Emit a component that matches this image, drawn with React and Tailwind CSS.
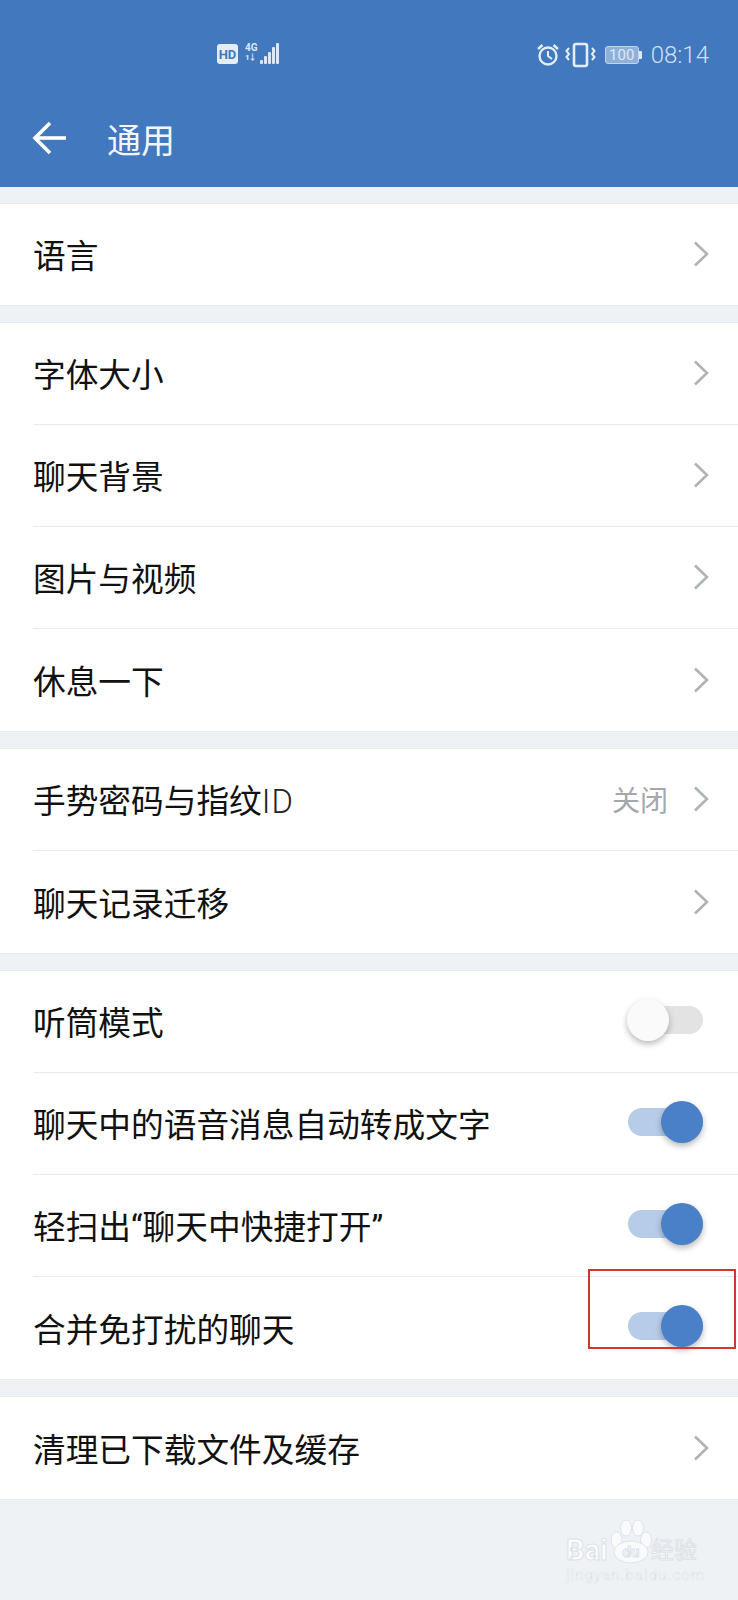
import React from 'react';

const FONT = "font-['Roboto','Noto_Sans_CJK_SC',sans-serif]";

const Chevron = () => (
  <svg width="18" height="28" viewBox="0 0 18 28" fill="none" stroke="#aeb3b8" strokeWidth="2.6" className="shrink-0 mb-[3px]">
    <polyline points="3,2.5 15,14 3,25.5" />
  </svg>
);

const Toggle = ({ on }) => (
  <div className={`relative w-[75px] h-[28px] rounded-full ${on ? 'bg-[#b7cce8]' : 'bg-[#e3e3e3]'}`}>
    <div
      className={`absolute top-[-7px] w-[42px] h-[42px] rounded-full shadow-[0_3px_6px_rgba(0,0,0,0.28)] ${
        on ? 'right-0 bg-[#4a80c8]' : 'left-[-1px] bg-[#fafafa]'
      }`}
    />
  </div>
);

const Row = ({ label, suffix, value, toggle, last, short }) => (
  <div className={`pl-[33px] ${short ? 'h-[101px]' : 'h-[102px]'}`}>
    <div className={`h-full flex items-center pt-[2px] pr-[28px] ${last ? '' : 'border-b border-[#e8e9ea]'}`}>
      <span className="flex-1 pt-[4px] text-[32.7px] leading-none text-[#111]">
        {label}
        {suffix && <span className="font-light tracking-[1px] text-[#222]">{suffix}</span>}
      </span>
      {value && <span className="pt-[3px] text-[28px] leading-none text-[#a3a8ac] mr-[24px]">{value}</span>}
      {toggle === undefined ? <Chevron /> : <div className="mr-[7px] mb-[6px]"><Toggle on={toggle} /></div>}
    </div>
  </div>
);

const Section = ({ rows }) => (
  <div className="bg-white border-y border-[#e8eaec]">
    {rows.map((r, i) => (
      <Row key={r.label} {...r} last={i === rows.length - 1} />
    ))}
  </div>
);

const StatusBar = () => (
  <div className="h-[104px] flex items-start pt-[44px] pl-[217px] pr-[29px]">
    <div className="w-[21px] h-[20px] rounded-[3px] bg-[#e4edf7] flex items-center justify-center text-[13px] leading-none font-bold text-[#4178be]">
      HD
    </div>
    <div className="ml-[7px] flex flex-col w-[15px] -mt-[1px] text-[10px] leading-[10px] font-bold text-[#dce8f5]">
      <span>4G</span>
      <span className="text-[8px] tracking-[-1px]">1↓</span>
    </div>
    <svg width="19" height="22" viewBox="0 0 19 22" fill="#dce8f5" className="-mt-[1px]">
      <rect x="0" y="17" width="3" height="4" rx="1" />
      <rect x="4" y="13" width="3" height="8" rx="1" />
      <rect x="8" y="9" width="3" height="12" rx="1" />
      <rect x="12" y="4" width="3" height="17" rx="1" />
      <rect x="16" y="0" width="3" height="21" rx="1" />
    </svg>
    <div className="ml-auto flex items-center -mt-[2px] gap-[5px]">
      <svg width="24" height="24" viewBox="0 0 24 24" fill="none" stroke="#e4edf7" strokeWidth="2.4">
        <circle cx="12" cy="13" r="8.5" />
        <polyline points="12,8 12,13 16,16" strokeWidth="2" />
        <line x1="2" y1="6" x2="6.5" y2="2" />
        <line x1="22" y1="6" x2="17.5" y2="2" />
      </svg>
      <svg width="31" height="26" viewBox="0 0 31 26" fill="none" stroke="#e4edf7" strokeWidth="2.6">
        <rect x="9" y="2" width="13" height="22" rx="2" />
        <polyline points="4,6 1.5,9 4,12 1.5,15 4,18" strokeWidth="2" />
        <polyline points="27,6 29.5,9 27,12 29.5,15 27,18" strokeWidth="2" />
      </svg>
      <div className="flex items-center ml-[4px]">
        <div className="w-[34px] h-[18px] rounded-[3px] border border-[#c2d5ec] bg-[#8fb0d9] flex items-center justify-center text-[15px] leading-none text-[#dce8f5]">
          100
        </div>
        <div className="w-[3px] h-[8px] bg-[#dce8f5] rounded-r-[1px]" />
      </div>
      <span className="text-[24px] leading-none font-light text-[#cfe0f2] ml-[4px]">08:14</span>
    </div>
  </div>
);

const Watermark = () => (
  <div className="absolute left-[566px] top-[1518px] w-[136px] flex flex-col text-[#fbfcfd] pointer-events-none">
    <svg width="44" height="46" viewBox="0 0 44 46" fill="#f9fafc" stroke="#dfe3ea" strokeWidth="1" className="absolute top-0 left-[44px]">
      <ellipse cx="16" cy="10" rx="5.5" ry="8" />
      <ellipse cx="28" cy="10" rx="5.5" ry="8" />
      <ellipse cx="6.5" cy="22" rx="5.5" ry="8" />
      <ellipse cx="36" cy="22" rx="5.5" ry="8" />
      <ellipse cx="21" cy="34" rx="17" ry="11" />
    </svg>
    <div className="relative mt-[19px] flex items-center h-[26px] font-bold text-[29px] leading-none [-webkit-text-stroke:1px_#dde1e8]">
      <span className="w-[45px]">Bai</span>
      <span className="w-[40px] text-center text-[15px] mt-[4px]">du</span>
      <span className="text-[23px] font-normal">经验</span>
    </div>
    <span className="mt-[5px] text-[15px] leading-none tracking-[1px] [-webkit-text-stroke:0.6px_#dfe3e9]">jingyan.baidu.com</span>
  </div>
);

export default function App() {
  return (
    <div className={`relative w-[738px] h-[1600px] overflow-hidden bg-[#eff2f5] ${FONT}`}>
      <div className="h-[187px] bg-[#4178be]">
        <StatusBar />
        <div className="h-[83px] flex items-start pt-[14px] pl-[32px] text-white">
          <svg width="36" height="36" viewBox="0 0 36 36" fill="none" stroke="#fff" strokeWidth="3.6" className="mt-[2px]">
            <line x1="3" y1="18" x2="34" y2="18" />
            <polyline points="18,3 3,18 18,33" />
          </svg>
          <span className="ml-[39px] mt-[3px] text-[34px] leading-[40px] text-[#f2f6fb]">通用</span>
        </div>
      </div>

      <div className="pt-[16px] flex flex-col gap-[16px]">
        <Section rows={[{ label: '语言', short: true }]} />
        <Section rows={[{ label: '字体大小' }, { label: '聊天背景' }, { label: '图片与视频' }, { label: '休息一下' }]} />
        <Section rows={[{ label: '手势密码与指纹', suffix: 'ID', value: '关闭' }, { label: '聊天记录迁移' }]} />
        <Section
          rows={[
            { label: '听筒模式', toggle: false },
            { label: '聊天中的语音消息自动转成文字', toggle: true },
            { label: '轻扫出“聊天中快捷打开”', toggle: true },
            { label: '合并免打扰的聊天', toggle: true },
          ]}
        />
        <Section rows={[{ label: '清理已下载文件及缓存' }]} />
      </div>

      {/* red annotation from the original screenshot */}
      <div className="absolute left-[588px] top-[1269px] w-[148px] h-[80px] border-2 border-[#d5342f]" />
      <Watermark />
    </div>
  );
}
